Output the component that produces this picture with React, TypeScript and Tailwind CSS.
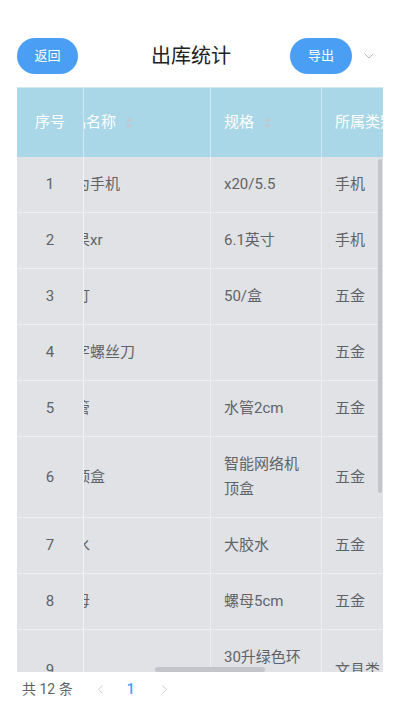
import { ChevronDown, ChevronLeft, ChevronRight } from "lucide-react";

type Row = { no: number; name: string; spec: string; cat: string };

const rows: Row[] = [
  { no: 1, name: "华为手机", spec: "x20/5.5", cat: "手机" },
  { no: 2, name: "苹果xr", spec: "6.1英寸", cat: "手机" },
  { no: 3, name: "铁钉", spec: "50/盒", cat: "五金" },
  { no: 4, name: "十字螺丝刀", spec: "", cat: "五金" },
  { no: 5, name: "水管", spec: "水管2cm", cat: "五金" },
  { no: 6, name: "机顶盒", spec: "智能网络机顶盒", cat: "五金" },
  { no: 7, name: "胶水", spec: "大胶水", cat: "五金" },
  { no: 8, name: "螺母", spec: "螺母5cm", cat: "五金" },
  { no: 9, name: "桶", spec: "30升绿色环保垃圾桶", cat: "文具类" },
  { no: 10, name: "笔记本", spec: "A5", cat: "文具类" },
];

function SortIcon() {
  return (
    <svg width="7" height="12" viewBox="0 0 7 12" className="ml-[10px] shrink-0">
      <path d="M3.5 0.5 L6.5 4.5 L0.5 4.5 Z" fill="#c3c6d0" />
      <path d="M3.5 11.5 L6.5 7.5 L0.5 7.5 Z" fill="#c3c6d0" />
    </svg>
  );
}

export default function App() {
  return (
    <div className="w-[400px] h-[711px] bg-white overflow-hidden font-['Roboto','Noto_Sans_CJK_SC',sans-serif]">
      {/* Top bar */}
      <div className="flex items-center pl-[17px] pr-[18px] pt-[38px]">
        <button className="w-[61px] h-[36px] rounded-full bg-[#4a9ff5] text-white text-[13px]">返回</button>
        <div className="flex-1 pl-[14px] text-center text-[20px] text-[#222]">出库统计</div>
        <button className="w-[62px] h-[36px] rounded-full bg-[#4a9ff5] text-white text-[13px]">导出</button>
        <div className="w-[30px] flex justify-end pr-[5px]">
          <ChevronDown size={16} strokeWidth={1.4} color="#b0b3ba" />
        </div>
      </div>

      {/* Table */}
      <div className="relative mx-[17px] mt-[13px] h-[585px] overflow-hidden border-t border-[#d3eaf2] bg-white">
        {/* Header */}
        <div className="flex h-[69px] bg-[#a9d7e7] text-white text-[15px]">
          <div className="w-[67px] shrink-0 flex items-center justify-center border-r border-[#cfe8f1]">序号</div>
          <div className="flex-1 overflow-hidden">
            <div className="flex h-full -ml-[36px]">
              <div className="w-[163px] shrink-0 flex items-center pl-[8px] border-r border-[#cfe8f1]">
                <span className="whitespace-nowrap">商品名称</span>
                <SortIcon />
              </div>
              <div className="w-[111px] shrink-0 flex items-center pl-[13px] border-r border-[#cfe8f1]">
                <span className="whitespace-nowrap">规格</span>
                <SortIcon />
              </div>
              <div className="w-[111px] shrink-0 flex items-center pl-[13px]">
                <span className="whitespace-nowrap">所属类别</span>
              </div>
            </div>
          </div>
        </div>

        {/* Body */}
        {rows.map((r) => (
          <div
            key={r.no}
            className={`flex ${r.no === 1 ? "min-h-[55px]" : "min-h-[56px]"} bg-[#e1e2e6] text-[#606266] text-[15px] leading-[25px] border-b border-[#eceef1]`}
          >
            <div className="w-[67px] shrink-0 flex items-center justify-center border-r border-[#f2f3f5]">{r.no}</div>
            <div className="flex-1 overflow-hidden">
              <div className="flex h-full -ml-[36px]">
                <div className="w-[163px] shrink-0 flex items-center pl-[12px] pr-[12px] border-r border-[#eceef1]">
                  <span className="whitespace-nowrap">{r.name}</span>
                </div>
                <div className="w-[111px] shrink-0 flex items-center pl-[13px] pr-[13px] py-[15px] border-r border-[#eceef1]">
                  <span className="break-all">{r.spec}</span>
                </div>
                <div className="w-[111px] shrink-0 flex items-center pl-[13px]">
                  <span className="whitespace-nowrap">{r.cat}</span>
                </div>
              </div>
            </div>
          </div>
        ))}

        {/* Scroll thumbs */}
        <div className="absolute right-[1px] top-[71px] w-[4px] h-[334px] rounded-full bg-[#c4c5ca]" />
        <div className="absolute left-[138px] bottom-0 w-[110px] h-[5px] rounded-full bg-[#c4c5ca]" />
      </div>

      {/* Pagination */}
      <div className="flex items-center h-[34px] pl-[22px] text-[14px] text-[#606266]">
        <span>共 12 条</span>
        <ChevronLeft size={15} strokeWidth={1.4} color="#c0c4cc" className="ml-[20px]" />
        <span className="ml-[19px] text-[#409eff] font-medium">1</span>
        <ChevronRight size={15} strokeWidth={1.4} color="#c0c4cc" className="ml-[22px]" />
      </div>
    </div>
  );
}
